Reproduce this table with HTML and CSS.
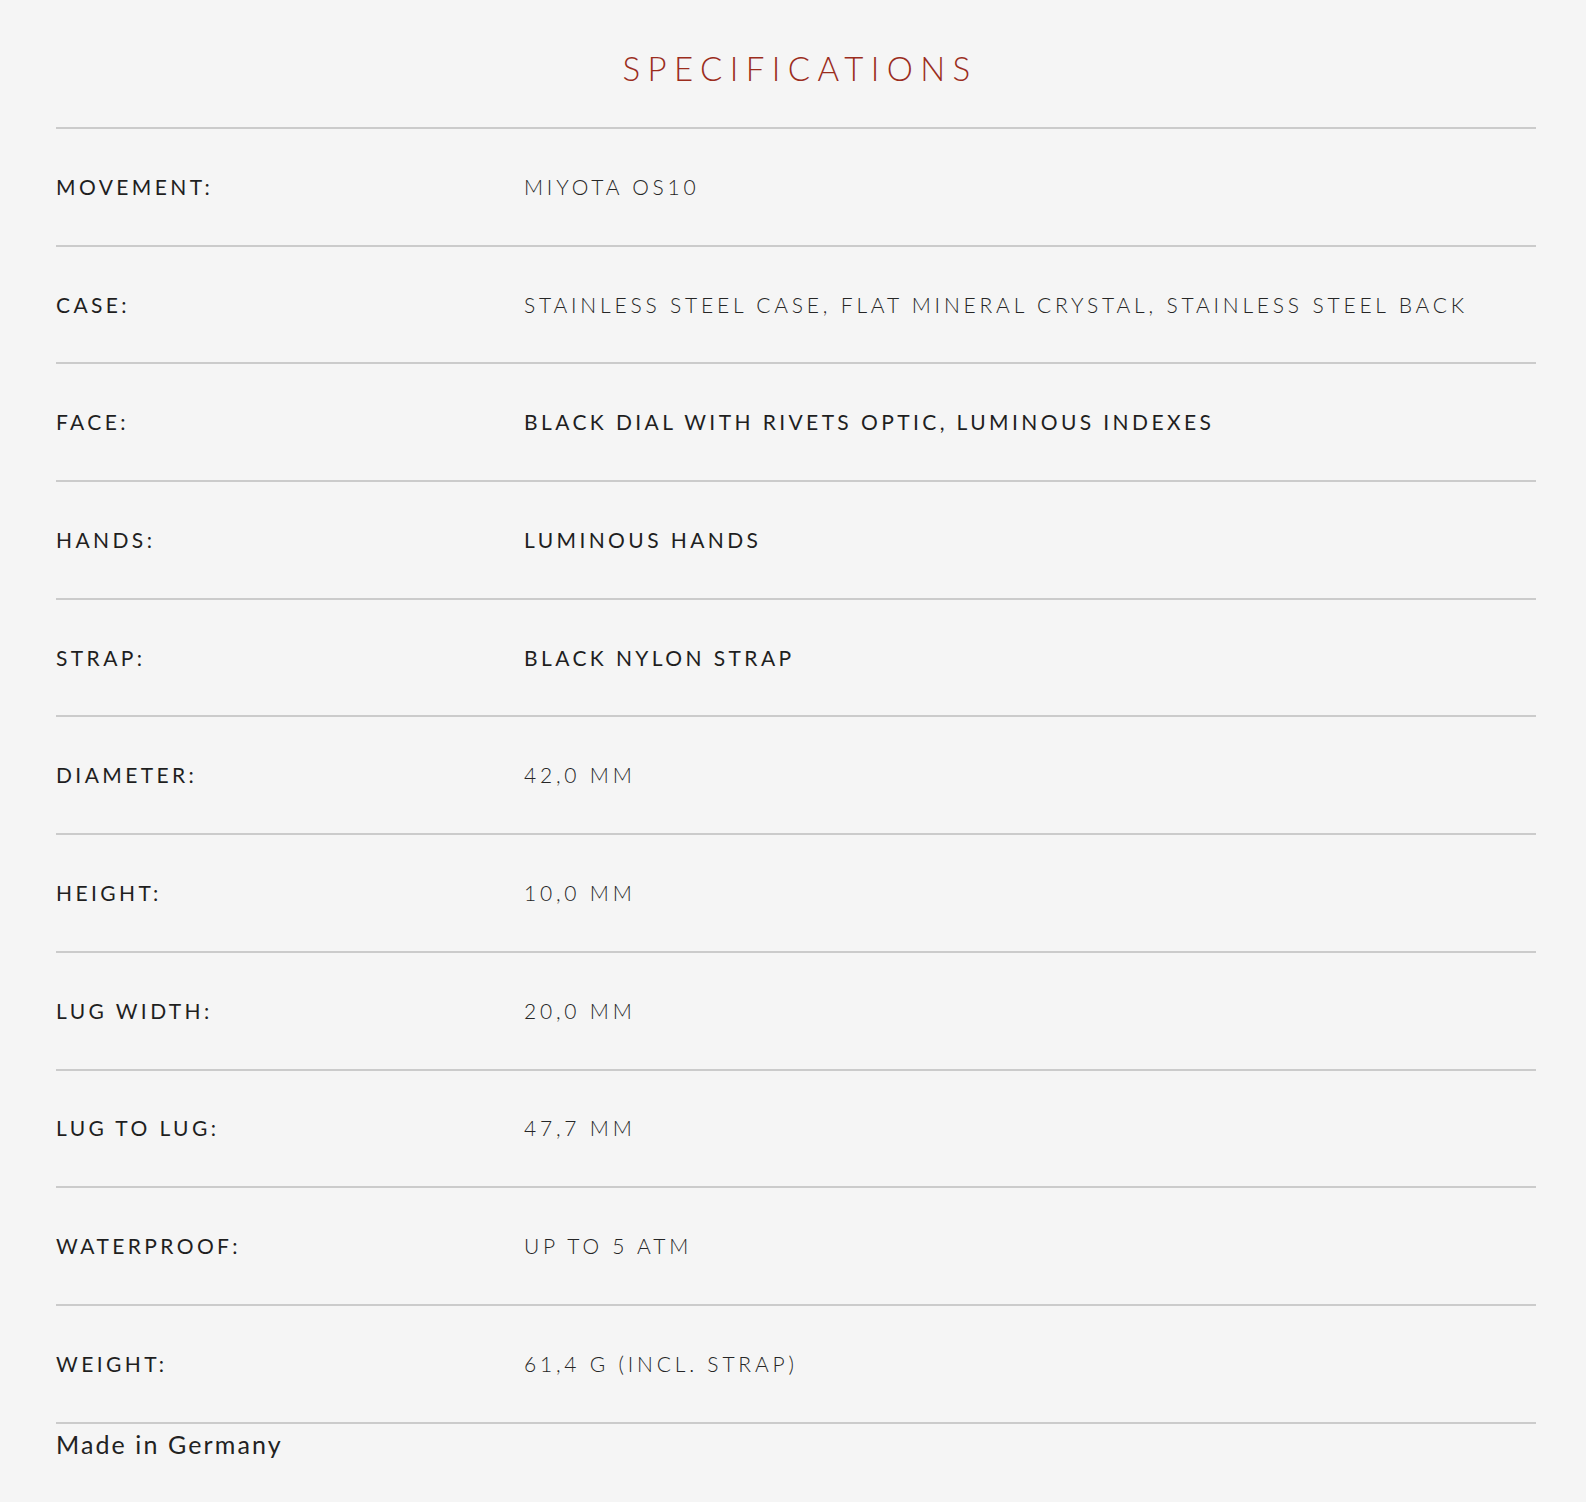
FILE: index.html
```html
<!DOCTYPE html>
<html lang="en">
<head>
<meta charset="utf-8">
<title>Specifications</title>
<link rel="stylesheet" href="styles.css">
</head>
<body>
<main class="specs">
  <h2 class="specs-title">SPECIFICATIONS</h2>
  <dl class="spec-list">
    <div class="spec-row"><dt class="spec-label">MOVEMENT:</dt><dd class="spec-value">MIYOTA OS10</dd></div>
    <div class="spec-row"><dt class="spec-label">CASE:</dt><dd class="spec-value">STAINLESS STEEL CASE, FLAT MINERAL CRYSTAL, STAINLESS STEEL BACK</dd></div>
    <div class="spec-row"><dt class="spec-label">FACE:</dt><dd class="spec-value spec-value--strong">BLACK DIAL WITH RIVETS OPTIC, LUMINOUS INDEXES</dd></div>
    <div class="spec-row"><dt class="spec-label">HANDS:</dt><dd class="spec-value spec-value--strong">LUMINOUS HANDS</dd></div>
    <div class="spec-row"><dt class="spec-label">STRAP:</dt><dd class="spec-value spec-value--strong">BLACK NYLON STRAP</dd></div>
    <div class="spec-row"><dt class="spec-label">DIAMETER:</dt><dd class="spec-value">42,0 MM</dd></div>
    <div class="spec-row"><dt class="spec-label">HEIGHT:</dt><dd class="spec-value">10,0 MM</dd></div>
    <div class="spec-row"><dt class="spec-label">LUG WIDTH:</dt><dd class="spec-value">20,0 MM</dd></div>
    <div class="spec-row"><dt class="spec-label">LUG TO LUG:</dt><dd class="spec-value">47,7 MM</dd></div>
    <div class="spec-row"><dt class="spec-label">WATERPROOF:</dt><dd class="spec-value">UP TO 5 ATM</dd></div>
    <div class="spec-row"><dt class="spec-label">WEIGHT:</dt><dd class="spec-value">61,4 G (INCL. STRAP)</dd></div>
  </dl>
  <p class="origin">Made in Germany</p>
</main>
</body>
</html>
```

FILE: styles.css
```css
html, body {
  margin: 0;
  padding: 0;
  background: #f5f5f5;
}

body {
  font-family: "Lato", "Inter", "Liberation Sans", sans-serif;
  color: #222;
}

.specs {
  padding: 52px 50px 40px 56px;
}

.specs-title {
  margin: 0 0 43px;
  font-size: 33px;
  line-height: 32px;
  font-weight: 300;
  letter-spacing: 7.4px;
  text-align: center;
  color: #9b2d1d;
  padding-left: 8px;
}

.spec-list {
  margin: 0;
  padding: 0;
  border-bottom: 2px solid #cbcbcb;
}

.spec-row {
  display: grid;
  grid-template-columns: 468px 1fr;
  align-items: center;
  height: 115.7px;
  border-top: 2px solid #cbcbcb;
}

.spec-label {
  margin: 0;
  font-size: 21px;
  line-height: 24px;
  font-weight: 400;
  letter-spacing: 3.4px;
  color: #1f1f1f;
}

.spec-value {
  margin: 0;
  font-size: 21px;
  line-height: 24px;
  font-weight: 300;
  letter-spacing: 3.8px;
  color: #262626;
}

.spec-value--strong {
  font-weight: 400;
  letter-spacing: 3.4px;
  color: #1f1f1f;
}

.origin {
  margin: 4px 0 0;
  font-size: 25px;
  line-height: 32px;
  letter-spacing: 2.1px;
  color: #222;
}
```
